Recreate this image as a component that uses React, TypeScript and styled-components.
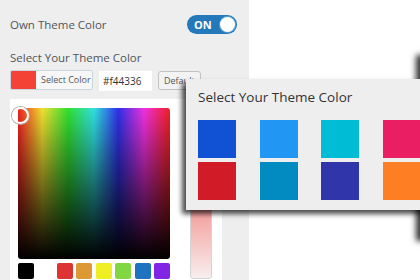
import React from "react";
import styled, { createGlobalStyle } from "styled-components";

const GlobalStyle = createGlobalStyle`
  html, body {
    margin: 0;
    padding: 0;
    width: 420px;
    height: 280px;
    overflow: hidden;
    background: #ffffff;
    font-family: "Open Sans", "Liberation Sans", sans-serif;
  }
`;

const Page = styled.div`
  position: relative;
  display: flex;
  width: 420px;
  height: 280px;
  overflow: hidden;
`;

const Panel = styled.div`
  width: 249px;
  height: 280px;
  background: #eeeeee;
  padding: 15px 10px 0 10px;
  box-sizing: border-box;
  display: flex;
  flex-direction: column;
`;

const OptionRow = styled.div`
  display: flex;
  align-items: center;
  justify-content: space-between;
  height: 19px;
  padding-right: 2px;
`;

const Label = styled.div<{ $top?: number }>`
  font-size: 11.5px;
  line-height: 18px;
  color: #50555a;
  margin-top: ${(p) => p.$top || 0}px;
`;

const Toggle = styled.div`
  width: 50px;
  height: 19px;
  border-radius: 10px;
  background: #2379ba;
  display: flex;
  align-items: center;
  justify-content: space-between;
  padding: 0 2px 0 7px;
  box-sizing: border-box;
  color: #fff;
  font-size: 11px;
  font-weight: 700;
`;

const Knob = styled.span`
  width: 15px;
  height: 15px;
  border-radius: 50%;
  background: #fff;
  box-shadow: 0 0 0 1px #5a9fd0;
`;

const ControlRow = styled.div`
  display: flex;
  align-items: flex-start;
  gap: 6px;
  margin-top: 3px;
  height: 21px;
`;

const SelectButton = styled.div`
  display: flex;
  width: 83px;
  height: 20px;
  border: 1px solid #c9d6de;
  border-radius: 2px;
  box-sizing: border-box;
  background: #f7f7f7;
  overflow: hidden;
`;

const CurrentSwatch = styled.span<{ $color: string }>`
  width: 25px;
  background: ${(p) => p.$color};
`;

const ButtonText = styled.span`
  font-size: 9px;
  line-height: 18px;
  color: #555;
  padding: 0 0 0 5px;
  white-space: nowrap;
`;

const HexInput = styled.div`
  width: 53px;
  height: 20px;
  margin-top: 1px;
  background: #fff;
  box-sizing: border-box;
  padding-left: 4px;
  font-size: 10px;
  line-height: 20px;
  color: #333;
`;

const DefaultButton = styled.div`
  width: 43px;
  height: 19px;
  margin-top: 1px;
  padding: 0 5px;
  border: 1px solid #c2c2c2;
  border-radius: 3px;
  background: #f3f3f3;
  box-sizing: border-box;
  font-size: 9px;
  line-height: 17px;
  color: #555;
`;

const Picker = styled.div`
  margin-top: 8px;
  width: 212px;
  flex: 1;
  background: #fff;
  padding: 9px 10px 0 8px;
  box-sizing: border-box;
  display: grid;
  grid-template-columns: 152px 22px;
  grid-template-rows: 151px auto;
  column-gap: 20px;
  align-content: start;
`;

const Square = styled.div`
  position: relative;
  grid-column: 1;
  grid-row: 1;
  width: 152px;
  height: 151px;
  border-radius: 3px;
  background: linear-gradient(to bottom, rgba(0, 0, 0, 0) 0%, #000 100%),
    linear-gradient(
      to right,
      #f02020 0%,
      #f0e030 16%,
      #30e030 33%,
      #30e0e0 50%,
      #3030e8 66%,
      #f030e0 83%,
      #f02020 100%
    );
`;

const Handle = styled.span`
  position: absolute;
  left: -6px;
  top: -1px;
  width: 13px;
  height: 13px;
  border-radius: 50%;
  border: 2px solid #fff;
  box-shadow: 0 0 0 1px #aaa;
`;

const PaletteRow = styled.div`
  grid-column: 1;
  grid-row: 2;
  display: flex;
  justify-content: space-between;
  margin-top: 4px;
`;

const PaletteSwatch = styled.span<{ $color: string }>`
  width: 16px;
  height: 16px;
  border-radius: 2px;
  background: ${(p) => p.$color};
`;

const Slider = styled.div`
  grid-column: 2;
  grid-row: 1 / span 2;
  height: 171px;
  border: 1px solid #d4d4d4;
  border-radius: 3px;
  box-sizing: border-box;
  background: linear-gradient(
    to bottom,
    #f44336 0%,
    #f4a3a0 62%,
    #f7eeee 100%
  );
`;

const Popup = styled.div`
  position: absolute;
  left: 186px;
  top: 79px;
  width: 250px;
  height: 131px;
  background: #eeeeee;
  box-sizing: border-box;
  padding: 9px 0 0 12px;
  box-shadow: -4px 4px 5px rgba(0, 0, 0, 0.7);
  z-index: 2;
`;

const PopupTitle = styled.div`
  font-size: 13.5px;
  line-height: 19px;
  color: #333;
`;

const ThemeGrid = styled.div`
  display: grid;
  grid-template-columns: repeat(4, 38px);
  grid-auto-rows: 38px;
  column-gap: 23.7px;
  row-gap: 4px;
  margin-top: 13px;
`;

const ThemeSwatch = styled.div<{ $color: string }>`
  background: ${(p) => p.$color};
`;

const EdgeSheet = styled.div`
  position: absolute;
  left: 421px;
  top: 56px;
  width: 60px;
  height: 184px;
  background: #fff;
  box-shadow: -4px 0 6px 1px rgba(0, 0, 0, 0.8);
  z-index: 1;
`;

const palette = [
  "#000000",
  "#ffffff",
  "#dd3333",
  "#dd9933",
  "#eeee22",
  "#81d742",
  "#1e73be",
  "#8224e3",
];

const themeColors = [
  "#1152d4",
  "#2196f3",
  "#00bcd4",
  "#e91e63",
  "#d11b27",
  "#028bc1",
  "#3036a9",
  "#fe7f23",
];

export default function App() {
  return (
    <Page>
      <GlobalStyle />
      <Panel>
        <OptionRow>
          <Label>Own Theme Color</Label>
          <Toggle>
            ON
            <Knob />
          </Toggle>
        </OptionRow>
        <Label $top={15}>Select Your Theme Color</Label>
        <ControlRow>
          <SelectButton>
            <CurrentSwatch $color="#f44336" />
            <ButtonText>Select Color</ButtonText>
          </SelectButton>
          <HexInput>#f44336</HexInput>
          <DefaultButton>Default</DefaultButton>
        </ControlRow>
        <Picker>
          <Square>
            <Handle />
          </Square>
          <Slider />
          <PaletteRow>
            {palette.map((c) => (
              <PaletteSwatch key={c} $color={c} />
            ))}
          </PaletteRow>
        </Picker>
      </Panel>
      <EdgeSheet />
      <Popup>
        <PopupTitle>Select Your Theme Color</PopupTitle>
        <ThemeGrid>
          {themeColors.map((c) => (
            <ThemeSwatch key={c} $color={c} />
          ))}
        </ThemeGrid>
      </Popup>
    </Page>
  );
}
